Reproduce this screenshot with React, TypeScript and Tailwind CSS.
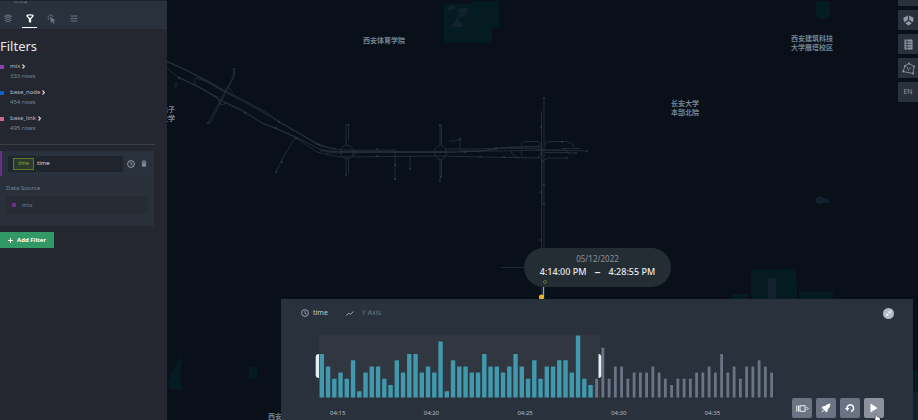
import React from "react";

const teal = [
  7, 5, 3, 4, 3, 6, 1, 4, 5, 5, 3, 2, 6, 4, 7, 7, 4, 5, 4, 9, 1, 6, 5, 5, 4, 4, 7, 5, 5, 4, 5, 7, 5,
  3, 6, 3, 5, 5, 6, 6, 4, 10, 3, 2,
];
const grey = [
  3, 8, 3, 5, 5, 3, 4, 4, 4, 5, 4, 3, 2, 3, 3, 3, 4, 4, 5, 4, 7, 4, 5, 3, 5, 5, 6, 5, 4,
];
const ticks = ["04:15", "04:20", "04:25", "04:30", "04:35"];
const PITCH = 6.25;
const UNIT = 6.2;

const datasets = [
  { name: "mix", rows: "333 rows", color: "bg-[#8a3fb5]" },
  { name: "base_node", rows: "454 rows", color: "bg-[#0d62d0]" },
  { name: "base_link", rows: "495 rows", color: "bg-[#c66a8c]" },
];

function LayersIcon() {
  return (
    <svg viewBox="0 0 16 18" className="h-[9px] w-2" fill="none" stroke="currentColor" strokeWidth="1.8">
      <path d="M8 1.5 15 4.5 8 7.5 1 4.5Z" fill="currentColor" fillOpacity=".4" />
      <path d="M1 8.5 8 11.5 15 8.5M1 12.5 8 15.5 15 12.5" />
    </svg>
  );
}

function FunnelIcon() {
  return (
    <svg viewBox="0 0 16 18" className="h-[9px] w-2" fill="currentColor">
      <path
        fillRule="evenodd"
        d="M1 1.5Q8-.8 15 1.5V5L10.3 10V16L8 17.5 5.7 16V10L1 5ZM3.5 3.6 6.8 7.4H9.2L12.5 3.6Q8 2.6 3.5 3.6Z"
      />
    </svg>
  );
}

function PointerIcon() {
  return (
    <svg viewBox="0 0 18 20" className="h-[10px] w-[9px]" fill="none" stroke="currentColor" strokeWidth="1.6">
      <path d="M4.6 12A5.4 5.4 0 1 1 12.6 5.5" />
      <path d="M6 5 17 13 13 14 15.5 18.5 13 19.5 10.8 15 7.8 18Z" fill="currentColor" stroke="none" />
    </svg>
  );
}

function SlidersIcon() {
  return (
    <svg viewBox="0 0 16 16" className="h-[9px] w-2" fill="none" stroke="currentColor" strokeWidth="1.8">
      <path d="M1 3H9M12 3H15M1 8H4M7 8H15M1 13H8M11 13H15M10.5 1V5M5.5 6V10M9.5 11V15" />
    </svg>
  );
}

function ClockIcon({ className }: { className: string }) {
  return (
    <svg viewBox="0 0 16 16" className={className} fill="none" stroke="currentColor" strokeWidth="1.8">
      <circle cx="8" cy="8" r="6.8" />
      <path d="M8 3.8V8.5L11 10.5" />
    </svg>
  );
}

function TrashIcon() {
  return (
    <svg viewBox="0 0 14 16" className="h-[7px] w-[6px]" fill="currentColor">
      <path d="M1 2H4.5L5.5.5H8.5L9.5 2H13V4H1ZM2 5H12V14Q12 15.5 10.5 15.5H3.5Q2 15.5 2 14Z" />
    </svg>
  );
}

const tabs = [
  { label: "Layers", icon: <LayersIcon />, active: false },
  { label: "Filters", icon: <FunnelIcon />, active: true },
  { label: "Interactions", icon: <PointerIcon />, active: false },
  { label: "Base map", icon: <SlidersIcon />, active: false },
];

function Sidebar() {
  return (
    <aside className="z-10 flex w-[167px] shrink-0 flex-col bg-[#242730]">
      <header className="flex flex-col overflow-hidden border-t border-[#1b222c] bg-[#29323c] pb-px">
        <span className="-mt-1 ml-[14px] text-[6px] leading-[8px] text-[#7d8796]">0.3.2</span>
        <nav className="mt-[9px] flex gap-[7px]">
          {tabs.map((t) => (
            <button
              key={t.label}
              aria-label={t.label}
              className={
                t.active
                  ? "flex h-[14px] w-[15px] items-start justify-center border-b border-white text-white"
                  : "flex h-[14px] w-[15px] items-start justify-center text-[#6a7485]"
              }
            >
              {t.icon}
            </button>
          ))}
        </nav>
      </header>

      <h1 className="mt-2 text-[13px] leading-[18px] text-[#e6e8ec]">Filters</h1>

      <ul className="mt-[7px] flex flex-col gap-[7px]">
        {datasets.map((d) => (
          <li key={d.name} className="flex gap-[6px]">
            <span className={`mt-[3px] h-1 w-1 ${d.color}`} />
            <div className="flex flex-col">
              <button className="flex items-center gap-[2px] text-[6px] leading-[9px] text-[#b4bac5]">
                {d.name}
                <svg viewBox="0 0 6 10" className="h-[5px] w-[3px]" fill="none" stroke="#d3d8e0" strokeWidth="2.4">
                  <path d="M1 1 5 5 1 9" />
                </svg>
              </button>
              <span className="text-[6px] leading-[10px] text-[#7a8494]">{d.rows}</span>
            </div>
          </li>
        ))}
      </ul>

      <div className="mr-3 mt-[11px] border-t border-[#3a4049]" />

      <section className="mr-[13px] mt-[6px] bg-[#29303a] pb-3">
        <div className="flex h-[25px] items-center border-l-2 border-[#6b2f8e] bg-[#29323c] pl-[6px]">
          <div className="flex h-4 w-[115px] items-center gap-[3px] bg-[#20242c] pl-[5px]">
            <span className="flex h-3 w-[21px] items-center justify-center border border-[#5d7d2c] bg-[#2c3a2a] text-[5px] text-[#87a83a]">
              time
            </span>
            <span className="text-[6px] text-[#d3d8e0]">time</span>
          </div>
          <button aria-label="Time playback" className="ml-1 text-[#a0a7b4]">
            <ClockIcon className="h-2 w-2" />
          </button>
          <button aria-label="Delete filter" className="ml-[6px] text-[#7d8796]">
            <TrashIcon />
          </button>
        </div>
        <div className="px-[6px] pt-2">
          <p className="text-[6px] leading-[9px] text-[#7a8494]">Data Source</p>
          <button className="mt-[3px] flex h-[18px] w-full items-center gap-[6px] bg-[#252c34] pl-[6px] text-[6px] text-[#7a8494]">
            <span className="h-1 w-1 bg-[#6b2f8e]" />
            mix
          </button>
        </div>
      </section>

      <button className="mt-[6px] flex h-4 w-[54px] items-center gap-[4px] bg-[#319866] pl-2 text-[6px] font-bold text-white">
        <svg viewBox="0 0 10 10" className="h-[5px] w-[5px]" stroke="currentColor" strokeWidth="2">
          <path d="M5 0V10M0 5H10" />
        </svg>
        Add Filter
      </button>
    </aside>
  );
}

function Roads() {
  return (
    <svg viewBox="167 0 751 420" preserveAspectRatio="xMinYMin slice" className="absolute inset-0 h-full w-full" fill="none">
      <g fill="#031b21">
        <path d="M444 4H472V1H499V27H492V43H444Z" />
        <path d="M816 1H830V16L826 19H819L816 16Z" />
        <path d="M751 269H795L797 285V300H751Z" />
        <path d="M732 294H748V300H732ZM799 292H833V300H799Z" />
        <path d="M181 356V390H170L168 384Q172 368 181 356Z" />
        <path d="M249 367H257V379H249ZM913 370H918V392H913Z" />
      </g>
      <g fill="#11212d">
        <path d="M448 6 453 5 458 10 460 8H468L467 14 462 17H458L459 21 463 25V27H452V25L456 21V18L460 13 455 8 450 11 448 10Z" />
        <path d="M768 278H776V300H768Z" />
        <path d="M816 198 820 196 829 200V203H823L819 204 816 202Z" />
        <path d="M174 86 176 82 178 84 176 88Z" />
        <path d="M913 392H918V420H913Z" />
      </g>
      <g stroke="#28333c" strokeWidth=".8">
        <path d="M167 61 180 67 206 80 224 90 249 103 267 113 279 122 300 134 318 144 330 148 341 150H395V180" />
        <path d="M167 68 179 78 199 87 217 98 222 101 243 110 260 122 276 128 296 138 317 152 328 155 341 157 440 156 482 157 540 158 543 161 548 158H567" />
        <path d="M179 77 200 88 217 97M224 102 245 113 262 123 279 130 294 136 319 149 337 152" />
        <path d="M167 62 190 72 223 91 250 105 280 122 302 135 320 146 336 149" />
        <path d="M218 98 199 87C194 85 192 79 197 78L208 82 223 91" />
        <path d="M234 69C234 80 228 85 222 97L208 123M235 71C234 80 230 83 228 88L210 124M228 87 233 93" />
        <path d="M217 97 221 105 227 103M295 138 284 156 276 172" />
        <path d="M320 151 343 151.500H392L500 151 544 150 587 151" />
        <path d="M326 153 345 152.500H450L482 151 510 147 542 147" />
        <path d="M460 151H480L502 148 541 149M445 149 480 149 540 146" />
        <path d="M346 124V145M348.500 125V141M346 159V175M348.500 159V175M410 156V169M440 124V145M441.500 125V145M440 160V181M441.500 160V177M449 141Q457 142 460 138.500V149" />
        <path d="M541.500 111V299M544 97V299M542 148V205" />
        <path d="M522 147C520 143 523 141.500 526 141.500H537Q541 141.500 541 146M545 146Q545 141.500 549 141.500H565Q572 142 574 147M522 150C520 155 522 158 526 158M541 152Q541 157 537 158M511 150Q512 157 520 158M563 148 568 153H576M537 150H562M562 148.500H580M545 152.500H570" />
        <circle cx="347" cy="152" r="6.500" />
        <ellipse cx="440.500" cy="152.500" rx="6" ry="7" />
        <path d="M353 156 357 152 353 150M434 152H446" />
        <path d="M501 267.500H542" stroke="#232e38" />
      </g>
      <g fill="#5d6b75">
        {[
          [234, 69], [208, 123], [276, 172], [282, 162], [296, 138], [279, 122], [245, 113], [276, 128],
          [318, 144], [348, 125], [346, 175], [395, 179], [395, 165], [377, 149], [410, 169], [377, 156],
          [440, 125], [440, 181], [441, 177], [460, 139], [465, 152], [480, 157], [544, 98], [541, 127],
          [587, 151], [567, 158], [576, 153], [541, 192], [544, 204], [496, 148], [504, 157], [562, 142],
          [179, 78], [544, 185], [541, 240],
        ].map(([x, y]) => (
          <rect key={`${x}-${y}`} x={x - 0.5} y={y - 0.5} width="1" height="1" />
        ))}
      </g>
      <path d="M543.500 287V296" stroke="#5fb9dc" strokeWidth="1.200" />
      <circle cx="541.500" cy="297" r="2.600" fill="#e3b22f" />
    </svg>
  );
}

function MapLabels() {
  return (
    <div className="text-[7px] font-bold leading-[9px] text-[#73848e]">
      <p className="absolute left-[196px] top-[36px]">西安体育学院</p>
      <p className="absolute left-[624px] top-[34px]">西安建筑科技<br />大学雁塔校区</p>
      <p className="absolute left-[504px] top-[99px]">长安大学<br />本部北院</p>
      <p className="absolute left-[-6px] top-[105px]">电子<br />大学</p>
      <p className="absolute left-[101px] top-[412px] whitespace-nowrap">西安</p>
    </div>
  );
}

function MapControls() {
  const cls = "flex h-5 w-5 items-center justify-center bg-[#29323c] text-[#8f99a8]";
  return (
    <div className="absolute right-0 top-[-14px] flex flex-col gap-1">
      <button aria-label="Split map" className={cls} />
      <button aria-label="3D map" className={cls}>
        <svg viewBox="0 0 20 20" className="h-[11px] w-[11px]" fill="currentColor">
          <path d="M9 1V8.500L2.500 13Q1 11 1 8V5ZM11 1 19 5V8Q19 11 17.500 13L11 8.500ZM10 11 16 15 10 19 4 15Z" />
        </svg>
      </button>
      <button aria-label="Legend" className={cls}>
        <svg viewBox="0 0 18 22" className="h-[11px] w-[9px]">
          <rect x="1" y="1" width="16" height="20" rx="1" fill="currentColor" />
          <path d="M6 1V21M3 6H15M3 11H15M3 16H15" stroke="#29323c" strokeWidth="1.600" />
        </svg>
      </button>
      <button aria-label="Draw on map" className={cls}>
        <svg viewBox="0 0 26 26" className="h-[13px] w-[13px]" fill="none" stroke="currentColor" strokeWidth="1.700">
          <path d="M6 8 14 3 24 9 22 23 2 19Z" />
          <g fill="currentColor" stroke="none">
            <circle cx="6" cy="8" r="2" /><circle cx="14" cy="3" r="2" /><circle cx="24" cy="9" r="2" />
            <circle cx="22" cy="23" r="2" /><circle cx="2.500" cy="19" r="2" />
            <circle cx="11" cy="12" r="1.500" /><circle cx="16" cy="12" r="1.500" /><circle cx="13" cy="16" r="1.500" />
          </g>
        </svg>
      </button>
      <button className={`${cls} text-[7px]`}>EN</button>
    </div>
  );
}

function Histogram() {
  return (
    <svg viewBox="0 0 460 85" className="block h-[85px] w-[460px]">
      <rect x="4" y="0" width="281" height="63" fill="#303741" />
      {teal.map((v, i) => (
        <rect key={i} x={4.6 + i * PITCH} y={62.4 - v * UNIT} width="4.400" height={v * UNIT} rx=".5" fill="#4099ad" />
      ))}
      {grey.map((v, i) => (
        <rect key={i} x={5.2 + (i + teal.length) * PITCH} y={62.4 - v * UNIT} width="2.800" height={v * UNIT} rx=".5" fill="#6a7485" />
      ))}
      <path d="M4 19V43Q.7 43 .7 40V22Q.7 19 4 19Z" fill="#e8edf0" />
      <path d="M283.500 19Q286.300 19 286.300 22V40Q286.300 43 283.500 43Z" fill="#e8edf0" />
      <g fill="#b4bac5" fontSize="6" textAnchor="middle">
        {ticks.map((t, i) => (
          <text key={t} x={22.7 + i * 93.7} y="80">{t}</text>
        ))}
      </g>
    </svg>
  );
}

function TimePanel() {
  const btn = "flex h-5 w-5 items-center justify-center rounded-[2px] bg-[#6a7485] text-white";
  return (
    <section className="absolute bottom-0 left-[114px] right-[5px] bg-[#29323c]">
      <div className="flex h-7 items-center pl-5 pr-[19px] text-[7px] text-[#a0a7b4]">
        <ClockIcon className="h-2 w-2" />
        <span className="ml-1 text-[#c3c9d2]">time</span>
        <button className="ml-[18px] flex items-center gap-2 text-[#6a7485]">
          <svg viewBox="0 0 16 10" className="h-[5px] w-2" fill="none" stroke="#a0a7b4" strokeWidth="2">
            <path d="M1 9 5 4.500 9 6.500 15 1" />
          </svg>
          Y Axis
        </button>
        <button aria-label="Minimize" className="ml-auto">
          <svg viewBox="0 0 22 22" className="h-[11px] w-[11px]">
            <circle cx="11" cy="11" r="11" fill="#b4bcc3" />
            <path d="M11.500 10.500V5.500L13.500 7.500 16 5 17 6 14.500 8.500 16.500 10.500ZM10.500 11.500V16.500L8.500 14.500 6 17 5 16 7.500 13.500 5.500 11.500Z" fill="#fff" />
          </svg>
        </button>
      </div>
      <div className="flex items-end justify-between pl-[34px] pr-[29px] pt-2">
        <Histogram />
        <div className="flex gap-1 pb-[2px]">
          <button aria-label="Animation window" className={btn}>
            <svg viewBox="0 0 26 14" className="h-[7px] w-[13px]" fill="none" stroke="currentColor" strokeWidth="1.800">
              <path d="M1.500 1V13M5 1V13M21 4 24 7 21 10" />
              <rect x="8" y="1.500" width="10" height="11" />
            </svg>
          </button>
          <button aria-label="Speed" className={btn}>
            <svg viewBox="0 0 20 20" className="h-[10px] w-[10px]" fill="currentColor">
              <path d="M19 1Q12 1 8 6L3 7 1 11 5 11 4.500 12.500 7.500 15.500 9 15 9 19 13 17 14 12Q19 8 19 1ZM4 14 1 19 6 16Z" />
            </svg>
          </button>
          <button aria-label="Reset" className={btn}>
            <svg viewBox="0 0 20 20" className="h-[10px] w-[10px]" fill="none" stroke="currentColor" strokeWidth="3">
              <path d="M4.500 12A6.500 6.500 0 1 1 12 16.500" />
              <path d="M0 10H9L4.500 16Z" fill="currentColor" stroke="none" />
            </svg>
          </button>
          <button aria-label="Play" className="relative flex h-5 w-5 items-center justify-center rounded-[2px] bg-[#8b929d] text-white">
            <svg viewBox="0 0 16 20" className="h-[10px] w-2" fill="currentColor">
              <path d="M1 1 15 10 1 19Z" />
            </svg>
            <svg viewBox="0 0 14 14" className="absolute left-[10px] top-4 h-[7px] w-[7px]">
              <path d="M2 1 4.500 1 6 5 12 7V14H4L1 9 3 8Z" fill="#fff" stroke="#1b2028" strokeWidth="1" />
            </svg>
          </button>
        </div>
      </div>
    </section>
  );
}

export default function App() {
  return (
    <div className="flex h-screen overflow-hidden bg-[#09101a] font-['Noto_Sans','Noto_Sans_CJK_SC',sans-serif]">
      <Sidebar />
      <main className="relative min-w-0 flex-1 overflow-hidden">
        <Roads />
        <MapLabels />
        <MapControls />
        <div className="absolute left-[357px] top-[248px] flex h-[39px] w-[147px] flex-col items-center rounded-full bg-[#242c34] pt-[5px]">
          <span className="text-[8px] leading-[12px] text-[#8b939e]">05/12/2022</span>
          <div className="flex gap-2 whitespace-nowrap text-[9px] font-medium leading-[14px] text-[#e8eaed]">
            <span>4:14:00 PM</span>
            <span className="text-[12px]">–</span>
            <span>4:28:55 PM</span>
          </div>
          <span className="absolute left-[19px] top-8 h-1 w-1 rounded-full border border-[#5f6a2c]" />
        </div>
        <TimePanel />
      </main>
    </div>
  );
}
